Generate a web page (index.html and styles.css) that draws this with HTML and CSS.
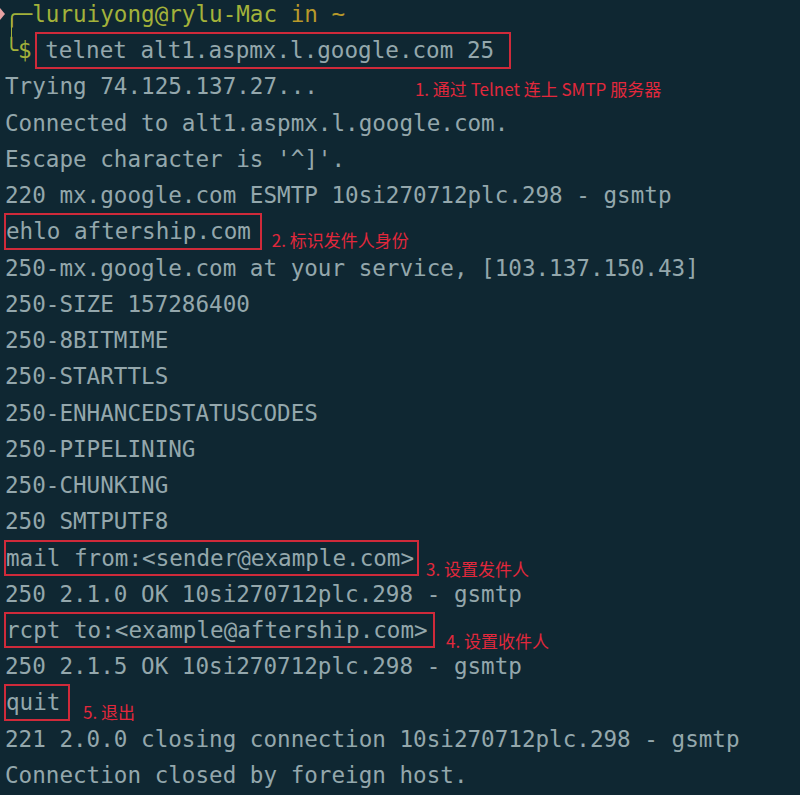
FILE: index.html
```html
<!DOCTYPE html>
<html lang="zh-CN">
<head>
<meta charset="utf-8">
<title>telnet SMTP</title>
<link rel="stylesheet" href="styles.css">
</head>
<body>
<div class="term">
  <div class="line"><span class="mark"></span><span class="green">╭─luruiyong@rylu-Mac </span><span class="gold">in ~</span></div>
  <div class="line"><span class="bridge"></span><span class="green">╰$</span><span class="box box-cmd">telnet alt1.aspmx.l.google.com 25</span></div>
  <div class="line">Trying 74.125.137.27...<span class="note note-1">1. 通过 Telnet 连上 SMTP 服务器</span></div>
  <div class="line">Connected to alt1.aspmx.l.google.com.</div>
  <div class="line">Escape character is '^]'.</div>
  <div class="line">220 mx.google.com ESMTP 10si270712plc.298 - gsmtp</div>
  <div class="line"><span class="box box-ehlo">ehlo aftership.com</span><span class="note note-2">2. 标识发件人身份</span></div>
  <div class="line">250-mx.google.com at your service, [103.137.150.43]</div>
  <div class="line">250-SIZE 157286400</div>
  <div class="line">250-8BITMIME</div>
  <div class="line">250-STARTTLS</div>
  <div class="line">250-ENHANCEDSTATUSCODES</div>
  <div class="line">250-PIPELINING</div>
  <div class="line">250-CHUNKING</div>
  <div class="line">250 SMTPUTF8</div>
  <div class="line"><span class="box box-mail">mail from:&lt;sender@example.com&gt;</span><span class="note note-3">3. 设置发件人</span></div>
  <div class="line">250 2.1.0 OK 10si270712plc.298 - gsmtp</div>
  <div class="line"><span class="box box-rcpt">rcpt to:&lt;example@aftership.com&gt;</span><span class="note note-4">4. 设置收件人</span></div>
  <div class="line">250 2.1.5 OK 10si270712plc.298 - gsmtp</div>
  <div class="line"><span class="box box-quit">quit</span><span class="note note-5">5. 退出</span></div>
  <div class="line">221 2.0.0 closing connection 10si270712plc.298 - gsmtp</div>
  <div class="line">Connection closed by foreign host.</div>
</div>
</body>
</html>
```
FILE: styles.css
```css
html, body {
  margin: 0;
  padding: 0;
  background: #0f2732;
  overflow: hidden;
}

.term {
  margin-top: -4px;
  padding-left: 5px;
  font-family: "DejaVu Sans Mono", monospace;
  font-size: 22.6px;
  color: #94a7ac;
}

.line {
  display: flex;
  align-items: flex-start;
  height: 36.24px;
  line-height: 36.24px;
  white-space: pre;
}

.mark {
  display: inline-block;
  width: 0;
  height: 0;
  margin-left: -5px;
  margin-top: 12px;
  border-left: 5px solid #e8a3a3;
  border-top: 6px solid transparent;
  border-bottom: 6px solid transparent;
}

.bridge {
  display: inline-block;
  width: 0;
  height: 24px;
  margin-top: -14px;
  margin-left: 6px;
  margin-right: -7.6px;
  border-left: 1.6px solid #a3b23a;
}

.green { color: #a3b23a; }
.gold { color: #b8992a; }

.box {
  box-sizing: border-box;
  height: 36.5px;
  line-height: 32.5px;
  border: 2px solid #cf2a3a;
}

.box-cmd { margin-left: 3.8px; padding-left: 7.8px; padding-right: 14.4px; }
.box-ehlo { margin-left: -1px; padding-right: 9px; }
.box-mail { margin-left: -1px; padding-right: 3px; }
.box-rcpt { margin-left: -1px; padding-right: 5.4px; }
.box-quit { margin-left: -1px; padding-right: 7.6px; }

.note {
  font-family: "Noto Sans CJK SC", "Noto Sans", sans-serif;
  font-size: 17px;
  line-height: 17px;
  color: #e2283c;
}

.note-1 { margin-left: 97px; margin-top: 12px; }
.note-2 { margin-left: 10px; margin-top: 18px; }
.note-3 { margin-left: 7px; margin-top: 20.5px; }
.note-4 { margin-left: 11px; margin-top: 20.5px; }
.note-5 { margin-left: 13px; margin-top: 18.5px; }
```
